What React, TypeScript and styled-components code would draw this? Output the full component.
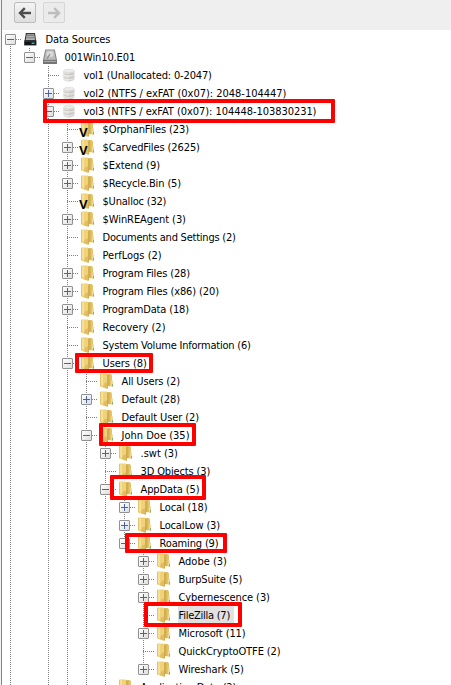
import React from "react";
import styled, { createGlobalStyle, css } from "styled-components";

type IconKind = "sources" | "disk" | "volume" | "folder" | "virtual";

interface TreeItem {
  label: string;
  icon?: IconKind;
  /** letter-spacing in px that gives the label its Tahoma-like width */
  track?: number;
  open?: boolean;
  closed?: boolean;
  selected?: boolean;
  /** further siblings follow below the visible area */
  more?: boolean;
  children?: TreeItem[];
}

const roaming: TreeItem[] = [
  { label: "Adobe (3)", closed: true, track: 0 },
  { label: "BurpSuite (5)", closed: true, track: -0.16 },
  { label: "Cybernescence (3)", closed: true, track: -0.1 },
  { label: "FileZilla (7)", selected: true, track: -0.25 },
  { label: "Microsoft (11)", closed: true, track: -0.1 },
  { label: "QuickCryptoOTFE (2)", track: -0.1 },
  { label: "Wireshark (5)", closed: true, track: -0.1 },
];

const appData: TreeItem[] = [
  { label: "Local (18)", closed: true, track: -0.11 },
  { label: "LocalLow (3)", closed: true, track: -0.15 },
  { label: "Roaming (9)", open: true, track: -0.15, children: roaming },
];

const johnDoe: TreeItem[] = [
  { label: ".swt (3)", closed: true, track: 0 },
  { label: "3D Objects (3)", track: -0.14 },
  { label: "AppData (5)", open: true, track: -0.1, children: appData },
  { label: "Application Data (2)", track: -0.18, more: true },
];

const users: TreeItem[] = [
  { label: "All Users (2)", track: -0.14 },
  { label: "Default (28)", closed: true, track: -0.1 },
  { label: "Default User (2)", track: -0.1 },
  { label: "John Doe (35)", open: true, more: true, track: 0.01, children: johnDoe },
];

const vol3: TreeItem[] = [
  { label: "$OrphanFiles (23)", icon: "virtual", track: -0.1 },
  { label: "$CarvedFiles (2625)", icon: "virtual", closed: true, track: -0.1 },
  { label: "$Extend (9)", closed: true, track: -0.06 },
  { label: "$Recycle.Bin (5)", closed: true, track: -0.12 },
  { label: "$Unalloc (32)", icon: "virtual", track: -0.2 },
  { label: "$WinREAgent (3)", closed: true, track: -0.07 },
  { label: "Documents and Settings (2)", track: -0.23 },
  { label: "PerfLogs (2)", track: 0 },
  { label: "Program Files (28)", closed: true, track: -0.14 },
  { label: "Program Files (x86) (20)", closed: true, track: -0.12 },
  { label: "ProgramData (18)", closed: true, track: -0.15 },
  { label: "Recovery (2)", track: 0 },
  { label: "System Volume Information (6)", track: -0.21 },
  { label: "Users (8)", open: true, more: true, track: -0.07, children: users },
];

const root: TreeItem = {
  label: "Data Sources",
  icon: "sources",
  open: true,
  more: true,
  track: -0.08,
  children: [
    {
      label: "001Win10.E01",
      icon: "disk",
      open: true,
      track: -0.12,
      children: [
        { label: "vol1 (Unallocated: 0-2047)", icon: "volume", track: -0.15 },
        { label: "vol2 (NTFS / exFAT (0x07): 2048-104447)", icon: "volume", closed: true, track: -0.02 },
        {
          label: "vol3 (NTFS / exFAT (0x07): 104448-103830231)",
          icon: "volume",
          open: true,
          more: true,
          track: -0.05,
          children: vol3,
        },
      ],
    },
  ],
};

/** Red frames drawn over the tree: left, top, width, height. */
const frames: [number, number, number, number][] = [
  [43, 99, 292, 24],
  [75, 353, 78, 20],
  [99, 423, 97, 23],
  [110, 475, 96, 25],
  [125, 533, 102, 20],
  [144, 602, 98, 25],
];

const GlobalStyle = createGlobalStyle`
  * { box-sizing: border-box; }
  body { margin: 0; background: #fff; }
`;

const Window = styled.div`
  position: relative;
  display: flex;
  flex-direction: column;
  width: 451px;
  height: 685px;
  overflow: hidden;
  background: #fff;
  color: #000;
  border-left: 1px solid #f2f2f2;
  box-shadow: inset 1px 0 0 #86868a;
  font: 11px/18px "DejaVu Sans Condensed", "DejaVu Sans", sans-serif;
`;

const Toolbar = styled.div`
  display: flex;
  flex: none;
  align-items: flex-start;
  gap: 7px;
  height: 30px;
  margin-left: 1px;
  padding: 2px 0 0 12px;
  background: #efefef;
`;

const NavButton = styled.button`
  display: flex;
  align-items: center;
  justify-content: center;
  width: 22px;
  height: 21px;
  padding: 0;
  border: 1px solid #bdbdbd;
  border-radius: 2px;
  background: linear-gradient(#f4f4f4, #dedede);
  color: #4d4d4d;

  &:disabled {
    border-color: #d6d6d6;
    background: #ebebeb;
    color: #bdbdbd;
  }
`;

const Tree = styled.div`
  display: flex;
  flex-direction: column;
  margin-left: 1px;
`;

const Row = styled.div`
  display: flex;
  flex: none;
  height: 18px;
  white-space: nowrap;
`;

const dots = "#808080 0 1px, transparent 1px 2px";

const Guide = styled.span<{ $line: boolean }>`
  flex: none;
  width: 19px;
  height: 18px;
  background: ${(p) => (p.$line ? `repeating-linear-gradient(${dots}) 8px 0 / 1px 18px no-repeat` : "none")};
`;

const Joint = styled.span<{ $top: boolean; $bottom: boolean }>`
  display: flex;
  align-items: center;
  flex: none;
  width: 21px;
  height: 18px;
  padding: 1px 0 0 3px;
  background-image: repeating-linear-gradient(${dots}), repeating-linear-gradient(90deg, ${dots});
  background-repeat: no-repeat;
  background-position: 8px ${(p) => (p.$top ? 0 : 10)}px, 8px 9px;
  background-size: 1px ${(p) => (p.$top ? 9 : 0) + (p.$bottom ? 9 : 0)}px, 12px 1px;
`;

const Toggle = styled.span<{ $plus: boolean }>`
  width: 11px;
  height: 11px;
  border: 1px solid #919191;
  border-radius: 1px;
  background:
    linear-gradient(#4763ae, #4763ae) 1px 4px / 7px 1px no-repeat,
    ${(p) => p.$plus && css`linear-gradient(#4763ae, #4763ae) 4px 1px / 1px 7px no-repeat,`}
    linear-gradient(135deg, #fff, #dedede);
`;

const IconSlot = styled.span`
  position: relative;
  flex: none;
  width: 16px;
  height: 18px;

  svg { display: block; }
`;

const VirtualMark = styled.span`
  position: absolute;
  left: -1px;
  top: 8px;
  font: bold 13px/10px "Liberation Sans", sans-serif;
`;

const Label = styled.span<{ $track: number; $selected: boolean }>`
  height: 18px;
  margin-left: 6px;
  padding: 1px 4px 0 0.5px;
  letter-spacing: ${(p) => p.$track}px;
  background: ${(p) => (p.$selected ? "#e1e1e1" : "transparent")};
`;

const Frame = styled.span<{ $box: [number, number, number, number] }>`
  position: absolute;
  left: ${(p) => p.$box[0] - 1}px;
  top: ${(p) => p.$box[1]}px;
  width: ${(p) => p.$box[2]}px;
  height: ${(p) => p.$box[3]}px;
  border: 4px solid #fe0000;
  border-radius: 1px;
  pointer-events: none;
`;

const Arrow = ({ right }: { right?: boolean }) => (
  <svg width="14" height="12" viewBox="0 0 14 12" fill="none" stroke="currentColor" strokeWidth="2.4">
    <path d={right ? "M1 6H12M7.2 1.2L12 6L7.2 10.8" : "M13 6H2M6.8 1.2L2 6L6.8 10.8"} />
  </svg>
);

const Folder = () => (
  <svg width="16" height="18" viewBox="0 0 16 18">
    <path d="M7.5 2H11.8L13 3.2V14.2H7.5Z" fill="#e4c468" />
    <path d="M9 2.5H10.5V14H9Z" fill="#d2ae50" />
    <path d="M12 8.5H14V14.8H12Z" fill="#ecd995" />
    <path d="M13 12H14V14.5H13Z" fill="#86b07c" />
    <path d="M1.3 1.6H7.5L9 2.6V16.6H7.4L1.3 14.4Z" fill="#f0d27a" />
    <path d="M1.8 2V14.3" stroke="#dcba5c" strokeWidth="1" />
    <path d="M3 2.2V13.5" stroke="#fae9a6" strokeWidth="1.4" />
    <path d="M5 11.5L9 10V16.6H7.4L4 15.3Z" fill="#e0bd60" />
    <path d="M8.5 2.6V16" stroke="#d0aa4c" strokeWidth=".9" />
  </svg>
);

const Volume = () => (
  <svg width="16" height="18" viewBox="0 0 16 18">
    <path d="M2.6 5V13.6C3.6 16 12.4 16 13.4 13.6V5Z" fill="#d3d2cf" />
    <path d="M2.6 5V13.6C3.5 15 6 15.4 8 15.4V5Z" fill="#e3e2df" />
    <path d="M2.6 7.4C4 9.3 12 9.3 13.4 7.4M2.6 11C4 12.9 12 12.9 13.4 11" fill="none" stroke="#bdbcb8" strokeWidth=".8" />
    <path d="M2.6 8.4C4 10.3 12 10.3 13.4 8.4M2.6 12C4 13.9 12 13.9 13.4 12" fill="none" stroke="#f1f0ee" strokeWidth=".8" />
    <ellipse cx="8" cy="5" rx="5.4" ry="1.8" fill="#ecebe8" stroke="#d2d1ce" strokeWidth=".5" />
  </svg>
);

const Disk = () => (
  <svg width="16" height="18" viewBox="0 0 16 18">
    <path d="M3.2 1.5H12.8L15 12V16H1V12Z" fill="#868686" />
    <path d="M4 2.3H12L13.8 11.8H2.2Z" fill="#bcbcbc" />
    <ellipse cx="8" cy="6" rx="3.6" ry="3" fill="#d9d9d9" />
    <path d="M8 6L5 10.6" stroke="#8a8a8a" strokeWidth="1.1" />
    <path d="M1 12.2H15V16H1Z" fill="#747474" />
    <path d="M2 13H14V14H2Z" fill="#a8a8a8" />
  </svg>
);

const Sources = () => (
  <svg width="16" height="18" viewBox="0 0 16 18">
    <path d="M2.8 3H12L13.2 11H1.5Z" fill="#3c3c3c" />
    <path d="M3.7 4.2H11.2L12 10H2.8Z" fill="#b4b4b4" />
    <path d="M3.8 5.6H11.2M3.5 7.8H11.5" stroke="#777" strokeWidth=".9" />
    <path d="M1.2 10.5H13.4V15.4H1.2Z" fill="#121516" />
    <path d="M1.8 11.2H12.8" stroke="#4c4c4c" strokeWidth=".7" />
    <path d="M8.6 12.6H11.6V14H8.6Z" fill="#35b9c6" />
  </svg>
);

const icons = { sources: Sources, disk: Disk, volume: Volume, folder: Folder, virtual: Folder };

interface NodeProps {
  item: TreeItem;
  guides: boolean[];
  last: boolean;
}

function TreeNode({ item, guides, last }: NodeProps) {
  const continues = !last || !!item.more;
  const Icon = icons[item.icon ?? "folder"];
  const children = item.children ?? [];
  return (
    <>
      <Row>
        {guides.map((line, i) => (
          <Guide key={i} $line={line} />
        ))}
        <Joint $top={guides.length > 0} $bottom={continues}>
          {(item.open || item.closed) && <Toggle $plus={!!item.closed} />}
        </Joint>
        <IconSlot>
          <Icon />
          {item.icon === "virtual" && <VirtualMark>V</VirtualMark>}
        </IconSlot>
        <Label $track={item.track ?? 0} $selected={!!item.selected}>
          {item.label}
        </Label>
      </Row>
      {children.map((child, i) => (
        <TreeNode
          key={child.label}
          item={child}
          guides={[...guides, continues]}
          last={i === children.length - 1}
        />
      ))}
    </>
  );
}

export default function App() {
  return (
    <>
      <GlobalStyle />
      <Window>
        <Toolbar>
          <NavButton aria-label="Back">
            <Arrow />
          </NavButton>
          <NavButton aria-label="Forward" disabled>
            <Arrow right />
          </NavButton>
        </Toolbar>
        <Tree>
          <TreeNode item={root} guides={[]} last={false} />
        </Tree>
        {frames.map((box) => (
          <Frame key={box[1]} $box={box} />
        ))}
      </Window>
    </>
  );
}
